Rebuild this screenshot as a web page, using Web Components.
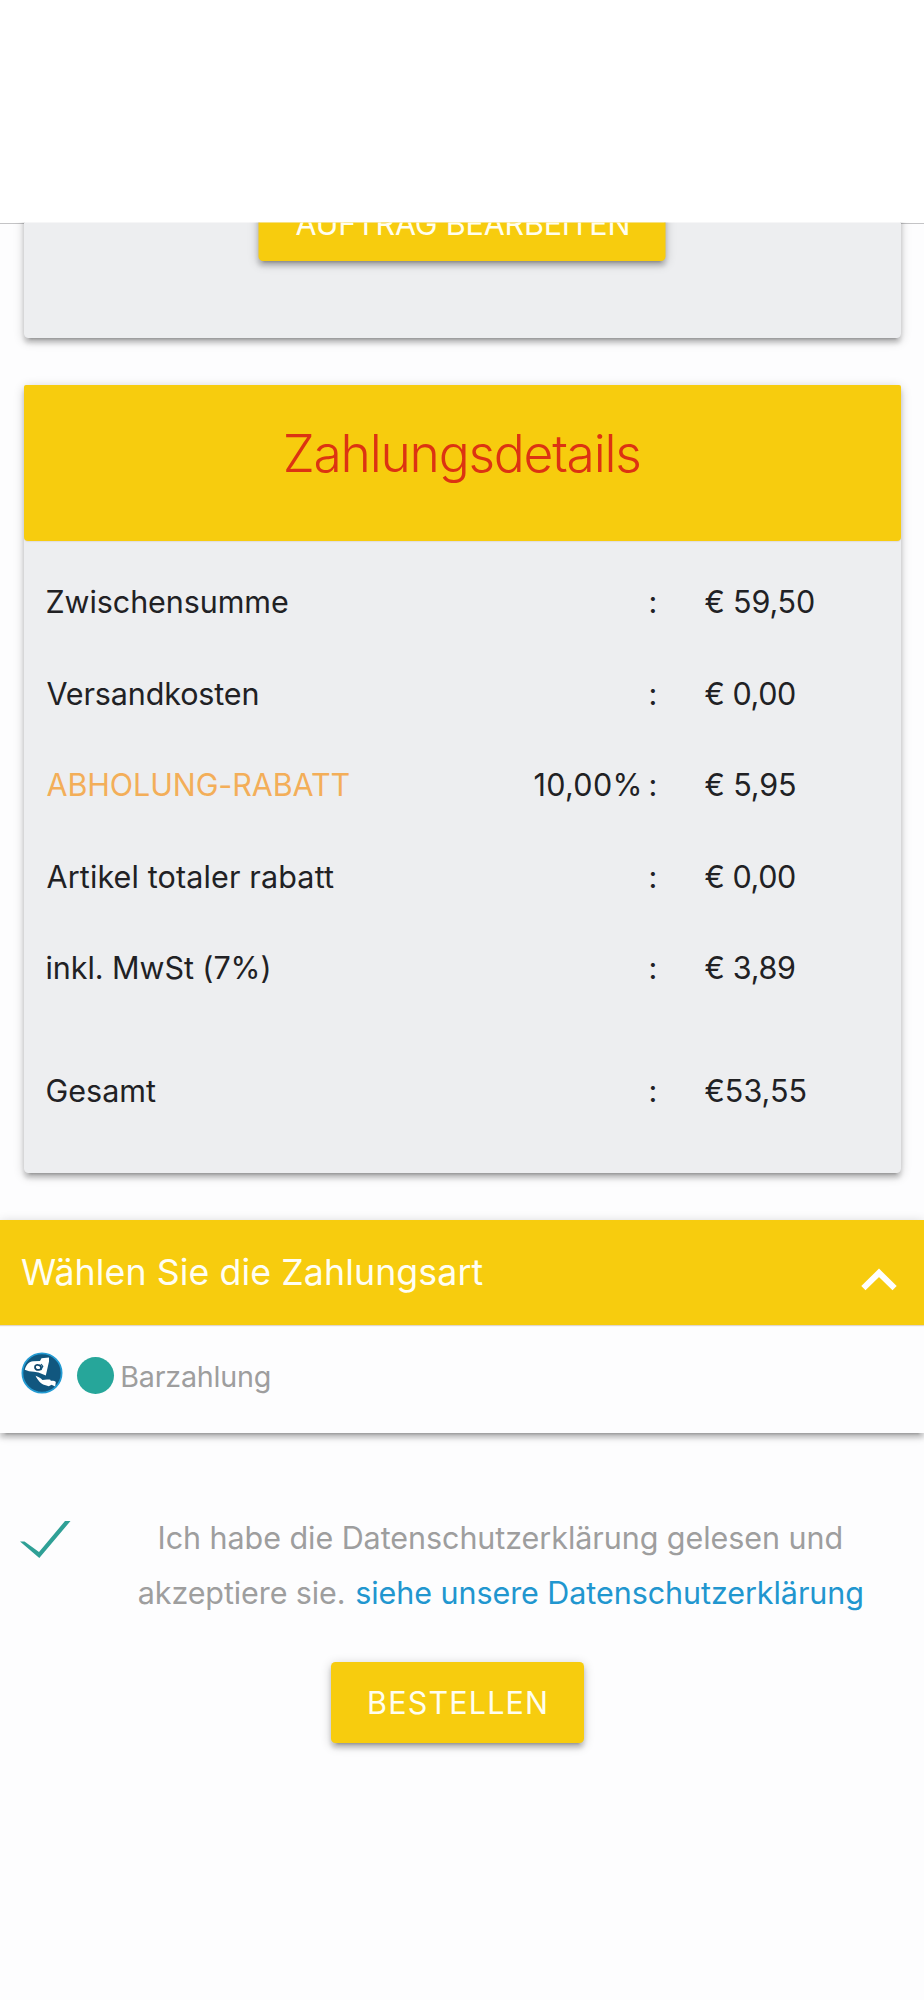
<!DOCTYPE html>
<html lang="de">
<head>
<meta charset="utf-8">
<title>Zahlungsdetails</title>
<style>
body{margin:0;background:#fdfdfe;font-family:Inter,"Liberation Sans",sans-serif;color:#212124;
--yellow:#f7cc0e;--depth:0 4.5px 4.5px 0 rgba(0,0,0,.16),0 6.7px 2.2px -4.5px rgba(0,0,0,.2),0 2.2px 11px 0 rgba(0,0,0,.2)}
</style>
</head>
<body>
<checkout-page></checkout-page>
<script>
const define = (name, html, setup) => {
  const t = document.createElement('template');
  t.innerHTML = html;
  customElements.define(name, class extends HTMLElement {
    connectedCallback() {
      if (this.shadowRoot) return;
      this.attachShadow({mode: 'open'}).append(t.content.cloneNode(true));
      if (setup) setup(this, this.shadowRoot);
    }
  });
};

// Tracks a single line of text out to the width given in "w".
const ctx = document.createElement('canvas').getContext('2d');
define('tracked-text', `<style>:host{display:block;white-space:pre;flex:none}span{display:inline-block}</style><span><slot></slot></span>`,
  (host, root) => {
    const cs = getComputedStyle(host), text = host.textContent, span = root.querySelector('span');
    ctx.font = `${cs.fontWeight} ${cs.fontSize} Inter`;
    const m = ctx.measureText(text), w = +host.getAttribute('w');
    const ink = m.actualBoundingBoxLeft + m.actualBoundingBoxRight;
    host.style.width = w + 'px';
    span.style.marginLeft = m.actualBoundingBoxLeft + 'px';
    if (text.length > 1) span.style.letterSpacing = (w - ink) / (text.length - 1) + 'px';
  });

define('raised-button', `<style>
:host{display:flex;justify-content:center;box-sizing:border-box;height:81px;line-height:82px;font-size:30.5px;color:#fffef0;background:var(--yellow);border-radius:4.5px;box-shadow:var(--depth)}
</style><slot></slot>`);

define('info-card', `<style>
:host{display:block;box-sizing:border-box;margin:0 23px 0 24px;background:#edeef0;border-radius:4.5px;box-shadow:var(--depth)}
</style><slot></slot>`);

define('card-title', `<style>
:host{display:flex;justify-content:center;height:156px;line-height:137px;background:var(--yellow);color:#dc3312;font-size:51.5px;font-weight:330;border-radius:2px 2px 4px 4px;box-shadow:0 1px 1px #dfdcdf}
</style><slot></slot>`);

define('sum-row', `<style>
:host{display:grid;grid-template-columns:488px 105px 11px 5px 1fr;height:91.6px;line-height:91.6px;font-size:30.5px;margin-left:22.5px}
.v{margin-left:49px}.c{grid-column:4}.l{grid-column:1}.r{grid-column:2}.v{grid-column:5}
.l,.r,.c,.v{grid-row:1}
</style><div class="l"><slot name="label"></slot></div><div class="r"><slot name="rate"></slot></div><div class="c"><tracked-text w="4.5">:</tracked-text></div><div class="v"><slot></slot></div>`);

define('cash-icon', `<style>:host{display:block;width:42px;height:42px}svg{display:block}</style>
<svg width="42" height="42" viewBox="0 0 42 42"><circle cx="21" cy="21" r="19.6" fill="#11577f" stroke="#239bd3" stroke-width="1.8"/>
<path fill="#fff" d="M3.8 17.8 C5 13 8 9.5 12 9.2 L19 9.1 L20.5 6.2 L28 5.5 L28 9.5 L24.8 23.6 L17.5 20.6 L13 19.7 L8 19.3 Z"/>
<path d="M14 15c0-2 2.5-2.7 4-1.8 3 1 2.7 4.8-.3 4.7-2.2.2-3.8-1.1-3.7-2.9z" fill="#fff" stroke="#11466a" stroke-width="1.8"/>
<path d="M20 12l1.8 2.4-2 3.6" stroke="#11577f" stroke-width="1.2" fill="none"/>
<path fill="#fff" d="M14.6 23.8 C18 25 20 26.3 21.4 28 L26 27.6 C28 27.2 30 27.4 29.8 28.9 C31.5 28.8 33.5 28.7 34.8 30 L34.2 34.6 L30.5 32.8 L27.8 34.2 C23 33.2 20.5 32 18.5 29.8 C17 27.7 15.3 26 14.6 23.8Z"/></svg>`);

define('payment-panel', `<style>
:host{display:block;height:213px;margin-top:47px;background:#fdfdfe;box-shadow:var(--depth)}
.head{display:flex;justify-content:space-between;height:105.5px;line-height:104px;padding:0 27px 0 21px;background:var(--yellow);color:#fffef3;font-size:35.7px;box-shadow:0 1px 1px #dfd6cb}
.head svg{flex:none;margin-top:48px}
.option{display:flex;padding:26.5px 0 0 21.3px;align-items:flex-start;color:#9e9e9e;font-size:28.7px}
.dot{width:37px;height:37px;border-radius:50%;background:#26a69a;margin:5px 8px 0 14px}
.option slot{display:block;line-height:49.5px}
</style><div class="head"><slot name="title"></slot><svg width="36" height="24" viewBox="0 0 36 24"><path d="M2.4 20.2 18 4.8 33.6 20.2" fill="none" stroke="#fff" stroke-width="6"/></svg></div>
<div class="option"><cash-icon></cash-icon><div class="dot"></div><slot></slot></div>`);

define('consent-row', `<style>
:host{display:flex;align-items:flex-start;margin-top:75px;padding-left:19px;font-size:30.5px;line-height:55.6px;color:#9e9e9e}
svg{flex:none;margin-top:11px}
.copy{display:flex;flex-direction:column;align-items:center;width:724px;margin-left:66.5px;margin-top:2.1px}
.line{display:flex;gap:12.5px}
a{color:#2196cf;text-decoration:none}
</style><svg width="53" height="41" viewBox="0 0 53 41"><path d="M1 22.5 L5.5 22.5 L20 33 L46 2 L51.5 2 L20.3 39Z" fill="#2fa096"/></svg>
<div class="copy"><div class="line"><tracked-text w="682">Ich habe die Datenschutzerklärung gelesen und</tracked-text></div>
<div class="line"><tracked-text w="205">akzeptiere sie.</tracked-text><a><tracked-text w="506">siehe unsere Datenschutzerklärung</tracked-text></a></div></div>`);

define('checkout-page', `<style>
:host{display:flow-root;height:2000px;box-sizing:border-box}
.top{height:222.5px;background:#fff}
.view{display:flow-root;border-top:1.5px solid #c4c4c6;clip-path:inset(0 0 -60px 0)}
.first{height:144px;margin-top:-30px;display:flow-root}
.first raised-button{width:407px;margin:-13.5px auto 0;transform:translateX(-.5px);line-height:87px}
.details{margin-top:47px;height:788px}
.rows{padding-top:15.6px}
.total{margin-top:31px}
.order{width:252.5px;margin:41px 0 0 331.3px}
</style>
<div class="top"></div>
<div class="view"><info-card class="first"><raised-button><tracked-text w="333">AUFTRAG BEARBEITEN</tracked-text></raised-button></info-card></div>
<info-card class="details"><card-title><tracked-text w="353.5">Zahlungsdetails</tracked-text></card-title>
<div class="rows">
<sum-row><tracked-text slot="label" w="241.5">Zwischensumme</tracked-text><tracked-text w="109.5">€ 59,50</tracked-text></sum-row>
<sum-row><tracked-text slot="label" w="211">Versandkosten</tracked-text><tracked-text w="90.5">€ 0,00</tracked-text></sum-row>
<sum-row><tracked-text slot="label" w="303" style="color:#f3ae59">ABHOLUNG-RABATT</tracked-text><tracked-text slot="rate" w="105">10,00%</tracked-text><tracked-text w="90.5">€ 5,95</tracked-text></sum-row>
<sum-row><tracked-text slot="label" w="287.5">Artikel totaler rabatt</tracked-text><tracked-text w="90.5">€ 0,00</tracked-text></sum-row>
<sum-row><tracked-text slot="label" w="222">inkl. MwSt (7%)</tracked-text><tracked-text w="90.5">€ 3,89</tracked-text></sum-row>
<sum-row class="total"><tracked-text slot="label" w="109.5">Gesamt</tracked-text><tracked-text w="101">€53,55</tracked-text></sum-row>
</div></info-card>
<payment-panel><tracked-text slot="title" w="461.5">Wählen Sie die Zahlungsart</tracked-text><tracked-text w="147.5">Barzahlung</tracked-text></payment-panel>
<consent-row></consent-row>
<raised-button class="order"><tracked-text w="177">BESTELLEN</tracked-text></raised-button>`);
</script>
</body>
</html>
